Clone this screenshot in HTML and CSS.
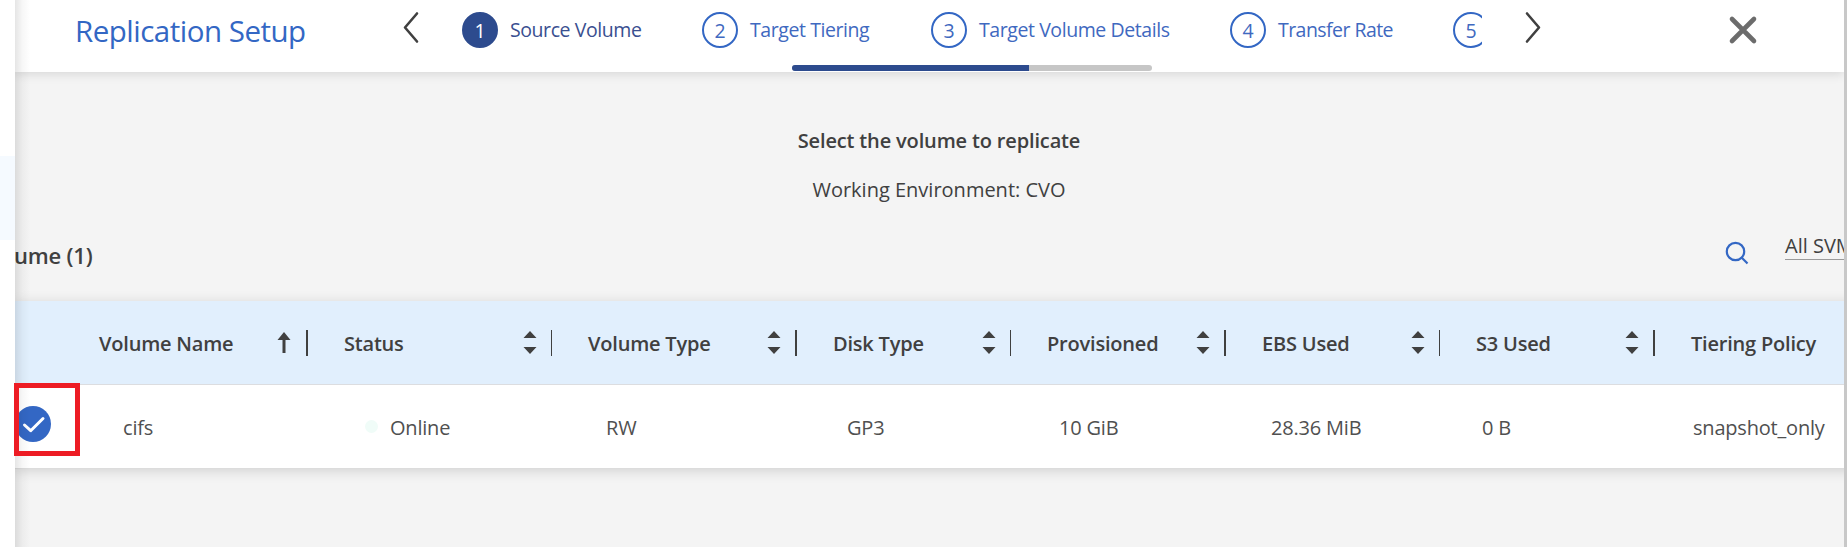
FILE: index.html
```
<!DOCTYPE html>
<html lang="en">
<head>
<meta charset="utf-8">
<title>Replication Setup</title>
<link rel="stylesheet" href="styles.css">
</head>
<body>
<div class="app">
  <aside class="rail"><div class="rail-active"></div></aside>
  <main class="panel">
    <header class="header">
      <h1 class="title">Replication Setup</h1>
      <svg class="prev" width="18" height="35" viewBox="0 0 18 35"><path d="M15 3.5 3 17.5 15 31.5"/></svg>
      <nav class="steps">
        <div class="step active"><span class="num">1</span><span class="label l1">Source Volume</span></div>
        <div class="step"><span class="num">2</span><span class="label l2">Target Tiering</span></div>
        <div class="step"><span class="num">3</span><span class="label l3">Target Volume Details</span></div>
        <div class="step"><span class="num">4</span><span class="label l4">Transfer Rate</span></div>
        <div class="step"><span class="num">5</span></div>
      </nav>
      <svg class="next" width="18" height="35" viewBox="0 0 18 35"><path d="M3 3.5 15 17.5 3 31.5"/></svg>
      <svg class="close" width="30" height="30" viewBox="0 0 30 30"><path d="M4 4 26 26M26 4 4 26"/></svg>
      <div class="progress"><div class="progress-fill"></div></div>
    </header>

    <section class="intro">
      <h2 class="prompt">Select the volume to replicate</h2>
      <p class="env">Working Environment: CVO</p>
    </section>

    <div class="toolbar">
      <h3 class="count">ume (1)</h3>
      <svg class="search" width="24" height="24" viewBox="0 0 24 24"><circle cx="10.5" cy="10.5" r="8.7"/><path d="M16.8 16.8 22.5 22.5"/></svg>
      <span class="svm">All SVMs</span>
    </div>

    <div class="table">
      <div class="row head">
        <div class="cell c-name"><span>Volume Name</span><svg class="sort" width="14" height="28" viewBox="0 0 14 28"><path d="M7 2 13.5 10H8.5V23H5.5V10H.5Z"/></svg></div>
        <div class="cell thin"><span>Status</span><svg class="sort" width="14" height="28" viewBox="0 0 14 28"><path d="M7 1 13.5 8H.5ZM7 24 .5 17H13.5Z"/></svg></div>
        <div class="cell"><span>Volume Type</span><svg class="sort" width="14" height="28" viewBox="0 0 14 28"><path d="M7 1 13.5 8H.5ZM7 24 .5 17H13.5Z"/></svg></div>
        <div class="cell thin"><span>Disk Type</span><svg class="sort" width="14" height="28" viewBox="0 0 14 28"><path d="M7 1 13.5 8H.5ZM7 24 .5 17H13.5Z"/></svg></div>
        <div class="cell"><span>Provisioned</span><svg class="sort" width="14" height="28" viewBox="0 0 14 28"><path d="M7 1 13.5 8H.5ZM7 24 .5 17H13.5Z"/></svg></div>
        <div class="cell thin"><span>EBS Used</span><svg class="sort" width="14" height="28" viewBox="0 0 14 28"><path d="M7 1 13.5 8H.5ZM7 24 .5 17H13.5Z"/></svg></div>
        <div class="cell"><span>S3 Used</span><svg class="sort" width="14" height="28" viewBox="0 0 14 28"><path d="M7 1 13.5 8H.5ZM7 24 .5 17H13.5Z"/></svg></div>
        <div class="cell last"><span>Tiering Policy</span></div>
      </div>
      <div class="row body">
        <div class="cell c-name">
          <svg class="check" width="36" height="36" viewBox="0 0 36 36"><circle cx="18" cy="18" r="18"/><path d="M9.5 19 15.7 24.7 28 12.5"/></svg>
          <span class="v-name">cifs</span>
        </div>
        <div class="cell v-status"><i class="dot"></i><span>Online</span></div>
        <div class="cell v-type"><span>RW</span></div>
        <div class="cell v-disk"><span>GP3</span></div>
        <div class="cell v-prov"><span>10 GiB</span></div>
        <div class="cell v-ebs"><span>28.36 MiB</span></div>
        <div class="cell v-s3"><span>0 B</span></div>
        <div class="cell v-tier"><span>snapshot_only</span></div>
      </div>
    </div>
    <div class="edge-shade"></div>
  </main>
  <div class="scroll-edge"></div>
  <div class="highlight"></div>
</div>
</body>
</html>
```
FILE: styles.css
```
* { box-sizing: border-box; margin: 0; padding: 0; }
body { font-family: "Open Sans", "Noto Sans", sans-serif; font-size: 20px; color: #404040; overflow: hidden; }
h1, h2, h3 { font-weight: 400; }
span, h1, h2, h3, p { white-space: nowrap; }
svg { flex: none; display: block; }

.app { position: relative; display: flex; width: 1847px; height: 547px; background: #f4f4f4; }
.rail { width: 15px; flex: none; background: #fff; padding-top: 156px; }
.rail-active { height: 84px; background: #f5faff; }
.panel { position: relative; flex: 1; min-width: 0; overflow: hidden; }
.scroll-edge { width: 3px; flex: none; background: #c8c8c8; }
.edge-shade { position: absolute; left: 0; top: 0; width: 15px; height: 547px; background: linear-gradient(90deg, rgba(0,0,0,.1), rgba(0,0,0,.03) 50%, rgba(0,0,0,0)); }

.header { position: relative; display: flex; align-items: flex-start; height: 72px; background: #fff; box-shadow: 0 2px 10px rgba(0,0,0,.12); }
.title { width: 372px; padding-left: 60px; margin-top: 11px; font-size: 29.5px; line-height: 40px; color: #3367c4; letter-spacing: -.5px; }
.prev, .next { margin-top: 10px; fill: none; stroke: #404040; stroke-width: 2.6; stroke-linecap: round; stroke-linejoin: round; }
.prev { margin-left: 15px; }
.steps { display: flex; gap: 60px; margin-left: 42px; width: 1020px; padding-top: 12px; overflow: hidden; font-size: 19.5px; letter-spacing: -.42px; }
.step { display: flex; flex: none; gap: 12px; line-height: 36px; color: #3f69c0; }
.num { width: 36px; height: 36px; flex: none; border: 2px solid #3367c4; border-radius: 50%; line-height: 33px; text-align: center; letter-spacing: 0; }
.active { color: #3a4f90; }
.active .num { background: #2d4b8e; border-color: #2d4b8e; color: #fff; }
.next { margin-left: 42px; }
.close { margin: 15px 0 0 186px; fill: none; stroke: #6c6c6c; stroke-width: 4.6; stroke-linecap: round; }
.progress { position: absolute; left: 777px; top: 65px; width: 360px; height: 6px; border-radius: 3px; background: #c6c6c6; overflow: hidden; }
.progress-fill { width: 237px; height: 6px; background: #2d4b8e; }
.label { width: 132px; }
.l2 { width: 121px; }
.l3 { width: 191px; }
.l4 { width: 115px; letter-spacing: -.55px; }

.intro { display: flex; flex-direction: column; align-items: center; height: 134px; width: 1848px; padding-top: 53px; }
.prompt { font-size: 20px; font-weight: 600; line-height: 32px; letter-spacing: -.15px; }
.env { margin-top: 17px; line-height: 32px; }

.toolbar { display: flex; align-items: flex-start; height: 95px; padding-top: 20px; }
.count { flex: none; width: 1710px; margin-top: 13px; font-size: 22px; font-weight: 600; line-height: 32px; letter-spacing: -.2px; text-indent: -1px; }
.search { margin-top: 15px; fill: none; stroke: #3367c4; stroke-width: 2.2; }
.svm { flex: none; margin: 6px 0 0 36px; line-height: 27px; border-bottom: 1px solid #9a9a9a; }

.table { width: 1900px; letter-spacing: -.2px; box-shadow: 0 2px 12px rgba(0,0,0,.14); }
.row { display: grid; grid-template-columns: 293px 244px 245px 214px 215px 214px 215px 260px; }
.head { height: 84px; padding-top: 29px; background: #e1effd; border-bottom: 1px solid #dcdde0; font-weight: 600; }
.head .cell { display: flex; height: 26px; padding: 0 14px 0 36px; border-right: 2px solid #404040; justify-content: space-between; }
.head .thin { border-right-width: 1px; }
.head .c-name { padding-left: 84px; padding-right: 15px; }
.head .last { border-right: 0; }
.head span { line-height: 27px; }
.sort { fill: #404040; }
.body { height: 84px; background: #fff; border-bottom: 1px solid #dcdcdc; color: #505050; }
.body .cell { display: flex; align-items: center; line-height: 28px; padding-top: 2px; }
.check { margin-top: -8px; fill: #3367c4; }
.check path { fill: none; stroke: #fff; stroke-width: 3; stroke-linecap: round; stroke-linejoin: round; }
.v-name { margin-left: 72px; }
.v-status { padding-left: 57px; }
.dot { width: 13px; height: 13px; margin: -3px 12px 0 0; border-radius: 50%; background: #f0fcf8; }
.v-type { padding-left: 54px; }
.v-disk { padding-left: 50px; }
.v-prov { padding-left: 48px; }
.v-ebs { padding-left: 45px; }
.v-s3 { padding-left: 42px; }
.v-tier { padding-left: 38px; }

.highlight { position: absolute; left: 14px; top: 383px; width: 66px; height: 73px; border: 5px solid #ed1c24; }
```
